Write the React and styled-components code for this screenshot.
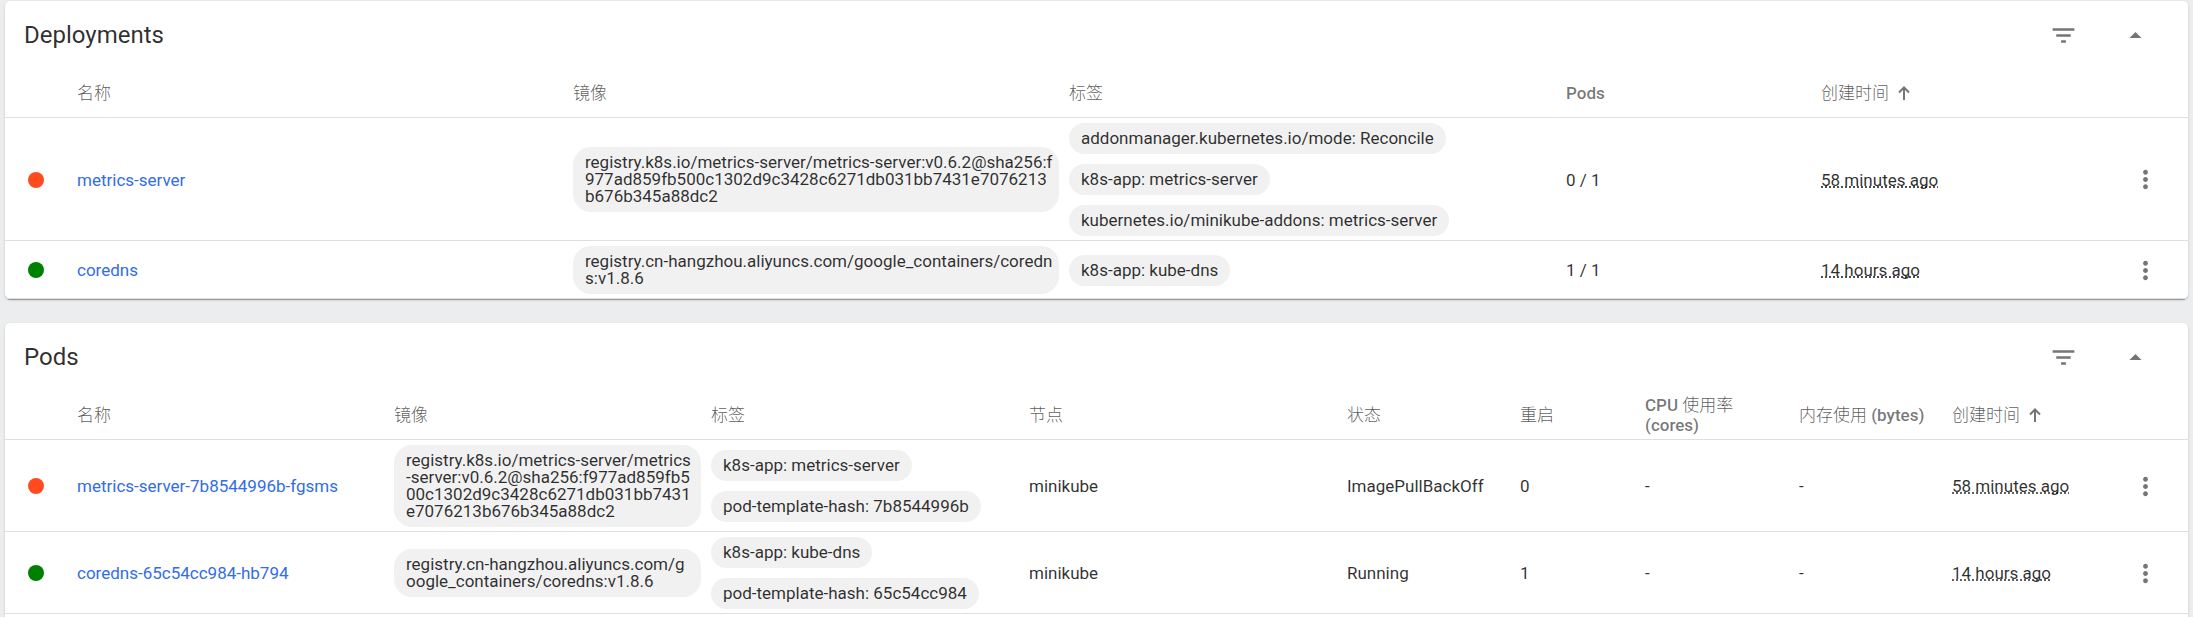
import React from "react";
import styled, { createGlobalStyle } from "styled-components";
import { MdArrowDropUp, MdFilterList, MdMoreVert } from "react-icons/md";

const GlobalStyle = createGlobalStyle`
  *, *::before, *::after { box-sizing: border-box; }
  body {
    margin: 0;
    background: #ecedef;
    color: rgba(0, 0, 0, 0.82);
    font-family: Roboto, "Noto Sans CJK SC", sans-serif;
    font-size: 17px;
    line-height: 20px;
  }
`;

const Page = styled.main`
  display: flex;
  flex-direction: column;
  gap: 24px;
  min-height: 100vh;
  padding: 1px 5px 0;
`;

const Card = styled.section`
  flex: ${(p) => (p.$fill ? "1 0 auto" : "none")};
  background: #fff;
  border-radius: ${(p) => (p.$fill ? "5px 5px 0 0" : "5px")};
  box-shadow: 0 2px 1px -1px rgba(0, 0, 0, 0.2), 0 1px 1px 0 rgba(0, 0, 0, 0.14),
    0 1px 3px 0 rgba(0, 0, 0, 0.12);
`;

const CardHeader = styled.header`
  display: flex;
  align-items: center;
  gap: 24px;
  height: 68px;
  padding: 0 29px 0 19px;
`;

const CardTitle = styled.h2`
  flex: 1;
  margin: 0;
  font-size: 24px;
  line-height: 32px;
  font-weight: 400;
`;

const IconButton = styled.button`
  display: flex;
  align-items: center;
  justify-content: center;
  width: ${(p) => p.$width || 48}px;
  height: ${(p) => p.$height || 48}px;
  padding: 0;
  border: 0;
  background: none;
  color: rgba(0, 0, 0, 0.54);
  font-size: 29px;
  cursor: pointer;
`;

const Table = styled.table`
  display: block;
`;

const TableGroup = styled.thead`
  display: block;
`;

const Row = styled.tr`
  display: grid;
  grid-template-columns: ${(p) => p.$columns};
  border-bottom: 1px solid #dfdfdf;
`;

const HeadCell = styled.th`
  display: flex;
  align-items: center;
  gap: 9px;
  height: 48px;
  padding: 0 10px 0 0;
  color: rgba(0, 0, 0, 0.54);
  font-weight: 500;
  text-align: left;
`;

const Han = styled.span`
  color: rgba(0, 0, 0, 0.66);
  font-weight: 300;
`;

const Cell = styled.td`
  display: flex;
  flex-direction: column;
  justify-content: center;
  align-items: flex-start;
  gap: 10px;
  min-width: 0;
  padding: ${(p) => (p.$status ? "5px 0 4px 23px" : "5px 10px 4px 0")};
`;

const MenuCell = styled(Cell)`
  padding-right: 0;
`;

const StatusDot = styled.span`
  width: 16px;
  height: 16px;
  border-radius: 50%;
  background: ${(p) => (p.$ok ? "#008000" : "#ff4b1f")};
`;

const ResourceLink = styled.a`
  color: #326de6;
  text-decoration: none;
`;

const Chip = styled.span`
  max-width: 100%;
  padding: 7px 12px;
  border-radius: 18px;
  background: #f1f1f1;
  line-height: 17px;
  word-break: break-all;
`;

const ImageChip = styled(Chip)`
  padding-right: ${(p) => (p.$wide ? 5 : 7)}px;
`;

const Age = styled.abbr`
  text-decoration: underline dotted;
  text-decoration-skip-ink: none;
`;

const deploymentColumns =
  "72px minmax(0, 496fr) minmax(0, 496fr) minmax(0, 497fr) minmax(0, 255fr) minmax(0, 299fr) 68px";
const podColumns =
  "72px minmax(0, 317fr) minmax(0, 317fr) minmax(0, 318fr) minmax(0, 318fr) minmax(0, 173fr) minmax(0, 125fr) minmax(0, 154fr) minmax(0, 153fr) minmax(0, 168fr) 68px";

const deployments = [
  {
    ok: false,
    name: "metrics-server",
    image:
      "registry.k8s.io/metrics-server/metrics-server:v0.6.2@sha256:f977ad859fb500c1302d9c3428c6271db031bb7431e7076213b676b345a88dc2",
    labels: [
      "addonmanager.kubernetes.io/mode: Reconcile",
      "k8s-app: metrics-server",
      "kubernetes.io/minikube-addons: metrics-server",
    ],
    values: ["0 / 1"],
    age: "58 minutes ago",
  },
  {
    ok: true,
    name: "coredns",
    image: "registry.cn-hangzhou.aliyuncs.com/google_containers/coredns:v1.8.6",
    labels: ["k8s-app: kube-dns"],
    values: ["1 / 1"],
    age: "14 hours ago",
  },
];

const pods = [
  {
    ok: false,
    name: "metrics-server-7b8544996b-fgsms",
    image:
      "registry.k8s.io/metrics-server/metrics-server:v0.6.2@sha256:f977ad859fb500c1302d9c3428c6271db031bb7431e7076213b676b345a88dc2",
    labels: ["k8s-app: metrics-server", "pod-template-hash: 7b8544996b"],
    values: ["minikube", "ImagePullBackOff", "0", "-", "-"],
    age: "58 minutes ago",
  },
  {
    ok: true,
    name: "coredns-65c54cc984-hb794",
    image: "registry.cn-hangzhou.aliyuncs.com/google_containers/coredns:v1.8.6",
    labels: ["k8s-app: kube-dns", "pod-template-hash: 65c54cc984"],
    values: ["minikube", "Running", "1", "-", "-"],
    age: "14 hours ago",
  },
];

function SortArrow() {
  return (
    <svg width="12" height="14" viewBox="0 0 12 14" fill="none" stroke="currentColor" strokeWidth="2" aria-hidden="true">
      <path d="M6 14V2M1 6.5l5-5 5 5" />
    </svg>
  );
}

// Chinese runs of a heading are set lighter than its Latin words.
function HeadingText({ text }) {
  return (
    <span>
      {text.split(/([\u4e00-\u9fff]+)/).map((part, i) => (i % 2 ? <Han key={i}>{part}</Han> : part))}
    </span>
  );
}

function ResourceCard({ title, headings, columns, rows, fill, wideImages }) {
  return (
    <Card $fill={fill}>
      <CardHeader>
        <CardTitle>{title}</CardTitle>
        <IconButton type="button" aria-label="filter">
          <MdFilterList />
        </IconButton>
        <IconButton type="button" aria-label="collapse">
          <MdArrowDropUp />
        </IconButton>
      </CardHeader>
      <Table>
        <TableGroup>
          <Row $columns={columns}>
            <HeadCell />
            {headings.map((text) => (
              <HeadCell key={text} scope="col">
                <HeadingText text={text} />
              </HeadCell>
            ))}
            <HeadCell scope="col" aria-sort="ascending">
              <HeadingText text="创建时间" />
              <SortArrow />
            </HeadCell>
            <HeadCell />
          </Row>
        </TableGroup>
        <TableGroup as="tbody">
          {rows.map((row) => (
            <Row key={row.name} $columns={columns}>
              <Cell $status>
                <StatusDot $ok={row.ok} />
              </Cell>
              <Cell>
                <ResourceLink href="#">{row.name}</ResourceLink>
              </Cell>
              <Cell>
                <ImageChip $wide={wideImages}>{row.image}</ImageChip>
              </Cell>
              <Cell>
                {row.labels.map((label) => (
                  <Chip key={label}>{label}</Chip>
                ))}
              </Cell>
              {row.values.map((value, i) => (
                <Cell key={i}>{value}</Cell>
              ))}
              <Cell>
                <Age>{row.age}</Age>
              </Cell>
              <MenuCell>
                <IconButton type="button" $width={50} $height={32} aria-label="actions">
                  <MdMoreVert />
                </IconButton>
              </MenuCell>
            </Row>
          ))}
        </TableGroup>
      </Table>
    </Card>
  );
}

export default function App() {
  return (
    <>
      <GlobalStyle />
      <Page lang="zh-CN">
        <ResourceCard
          title="Deployments"
          headings={["名称", "镜像", "标签", "Pods"]}
          columns={deploymentColumns}
          rows={deployments}
          wideImages
        />
        <ResourceCard
          title="Pods"
          headings={["名称", "镜像", "标签", "节点", "状态", "重启", "CPU 使用率 (cores)", "内存使用 (bytes)"]}
          columns={podColumns}
          rows={pods}
          fill
        />
      </Page>
    </>
  );
}
